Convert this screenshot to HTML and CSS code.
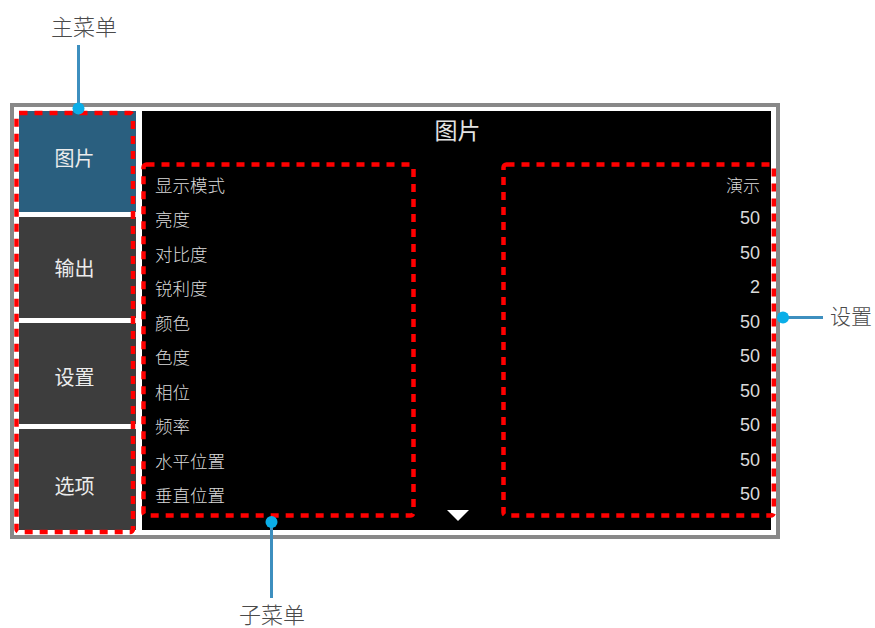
FILE: index.html
```html
<!DOCTYPE html>
<html lang="zh-CN">
<head>
<meta charset="utf-8">
<title>OSD 菜单 - 图片</title>
<link rel="stylesheet" href="styles.css">
</head>
<body>
  <div class="stage">

    <div class="osd">
      <!-- main menu tiles -->
      <div class="menu">
        <div class="tile current">图片</div>
        <div class="tile">输出</div>
        <div class="tile">设置</div>
        <div class="tile">选项</div>
      </div>

      <!-- sub menu panel -->
      <div class="panel">
        <div class="panel-title">图片</div>
        <div class="rows">
          <div class="row"><span class="label">显示模式</span><span class="value cjk">演示</span></div>
          <div class="row"><span class="label">亮度</span><span class="value">50</span></div>
          <div class="row"><span class="label">对比度</span><span class="value">50</span></div>
          <div class="row"><span class="label">锐利度</span><span class="value">2</span></div>
          <div class="row"><span class="label">颜色</span><span class="value">50</span></div>
          <div class="row"><span class="label">色度</span><span class="value">50</span></div>
          <div class="row"><span class="label">相位</span><span class="value">50</span></div>
          <div class="row"><span class="label">频率</span><span class="value">50</span></div>
          <div class="row"><span class="label">水平位置</span><span class="value">50</span></div>
          <div class="row"><span class="label">垂直位置</span><span class="value">50</span></div>
        </div>
        <div class="more"></div>
      </div>
    </div>

    <!-- callouts drawn over the screen -->
    <svg class="marks" width="875" height="628" viewBox="0 0 875 628">
      <g class="dash">
        <rect x="16.5" y="113" width="116.5" height="419" rx="3"/>
        <rect x="143.5" y="164.5" width="270" height="351" rx="3"/>
        <rect x="503.5" y="164.5" width="270.3" height="351" rx="3"/>
      </g>
      <g class="lead">
        <line x1="78.5" y1="45" x2="78.5" y2="108"/>
        <line x1="271.5" y1="522" x2="271.5" y2="598"/>
        <line x1="783" y1="317.5" x2="823" y2="317.5"/>
      </g>
      <g class="dot">
        <circle cx="78.5" cy="108.5" r="6"/>
        <circle cx="271.5" cy="522" r="6"/>
        <circle cx="783" cy="317.5" r="6"/>
      </g>
    </svg>

    <span class="callout c-main">主菜单</span>
    <span class="callout c-sub">子菜单</span>
    <span class="callout c-set">设置</span>
  </div>
</body>
</html>
```

FILE: styles.css
```css
html, body
{
  margin: 0;
  padding: 0;
  background: #fff;
}

.stage
{
  position: relative;
  width: 875px;
  height: 628px;
  padding: 103px 0 0 10px;
  box-sizing: border-box;
  overflow: hidden;
  font-family: "Liberation Sans", "Noto Sans CJK SC", sans-serif;
}

/* the projector screen */
.osd
{
  width: 770px;
  height: 436px;
  box-sizing: border-box;
  border: 4px solid #888;
  background: #fff;
  padding: 4px 5px 5px 5px;
  display: flex;
  gap: 6px;
}

.menu
{
  width: 117px;
  display: flex;
  flex-direction: column;
  gap: 5px;
}

.tile
{
  height: 101px;
  box-sizing: border-box;
  flex: none;
  display: flex;
  align-items: center;
  justify-content: center;
  padding-right: 6px;
  background: #3d3d3d;
  color: #ececec;
  font-family: "Noto Sans CJK SC", sans-serif;
  font-size: 20px;
}

.tile.current { background: #2a5f7f; padding-bottom: 8px; }
.tile:nth-child(3) { padding-top: 6px; }
.tile:nth-child(4) { padding-top: 11px; }

.panel
{
  flex: 1;
  background: #000;
  color: #dadada;
  padding: 0 11px 0 13px;
  display: flex;
  flex-direction: column;
}

.panel-title
{
  height: 36px;
  line-height: 36px;
  text-align: center;
  font-family: "Noto Sans CJK SC", sans-serif;
  font-size: 23px;
  color: #e4e4e4;
}

.rows
{
  margin-top: 20px;
  display: flex;
  flex-direction: column;
}

.row
{
  height: 34.5px;
  display: flex;
  align-items: center;
  justify-content: space-between;
  font-size: 18px;
}

.label { font-family: "Noto Sans CJK SC", sans-serif; font-size: 17.5px; font-weight: 300; }
.value { font-family: "Liberation Sans", sans-serif; }
.value.cjk { font-family: "Noto Sans CJK SC", sans-serif; font-size: 17px; font-weight: 300; }

/* down arrow: more items below */
.more
{
  align-self: center;
  margin-top: -2.5px;
  width: 0;
  height: 0;
  border-left: 11px solid transparent;
  border-right: 11px solid transparent;
  border-top: 11px solid #fff;
}

/* annotation layer */
.marks
{
  position: absolute;
  left: 0;
  top: 0;
  pointer-events: none;
}

.dash rect
{
  fill: none;
  stroke: #ff0000;
  stroke-width: 4.5;
  stroke-dasharray: 8 7;
}

.lead line
{
  stroke: #3d8fbf;
  stroke-width: 3;
}

.dot circle { fill: #0aaee8; }

.callout
{
  position: absolute;
  font-family: "Noto Sans CJK SC", sans-serif;
  font-size: 22px;
  font-weight: 300;
  line-height: 24px;
  color: #4a4a4a;
  white-space: nowrap;
}

.c-main { left: 51px; top: 13px; }
.c-sub  { left: 239px; top: 601px; }
.c-set  { left: 830px; top: 303px; font-size: 21px; }
```
